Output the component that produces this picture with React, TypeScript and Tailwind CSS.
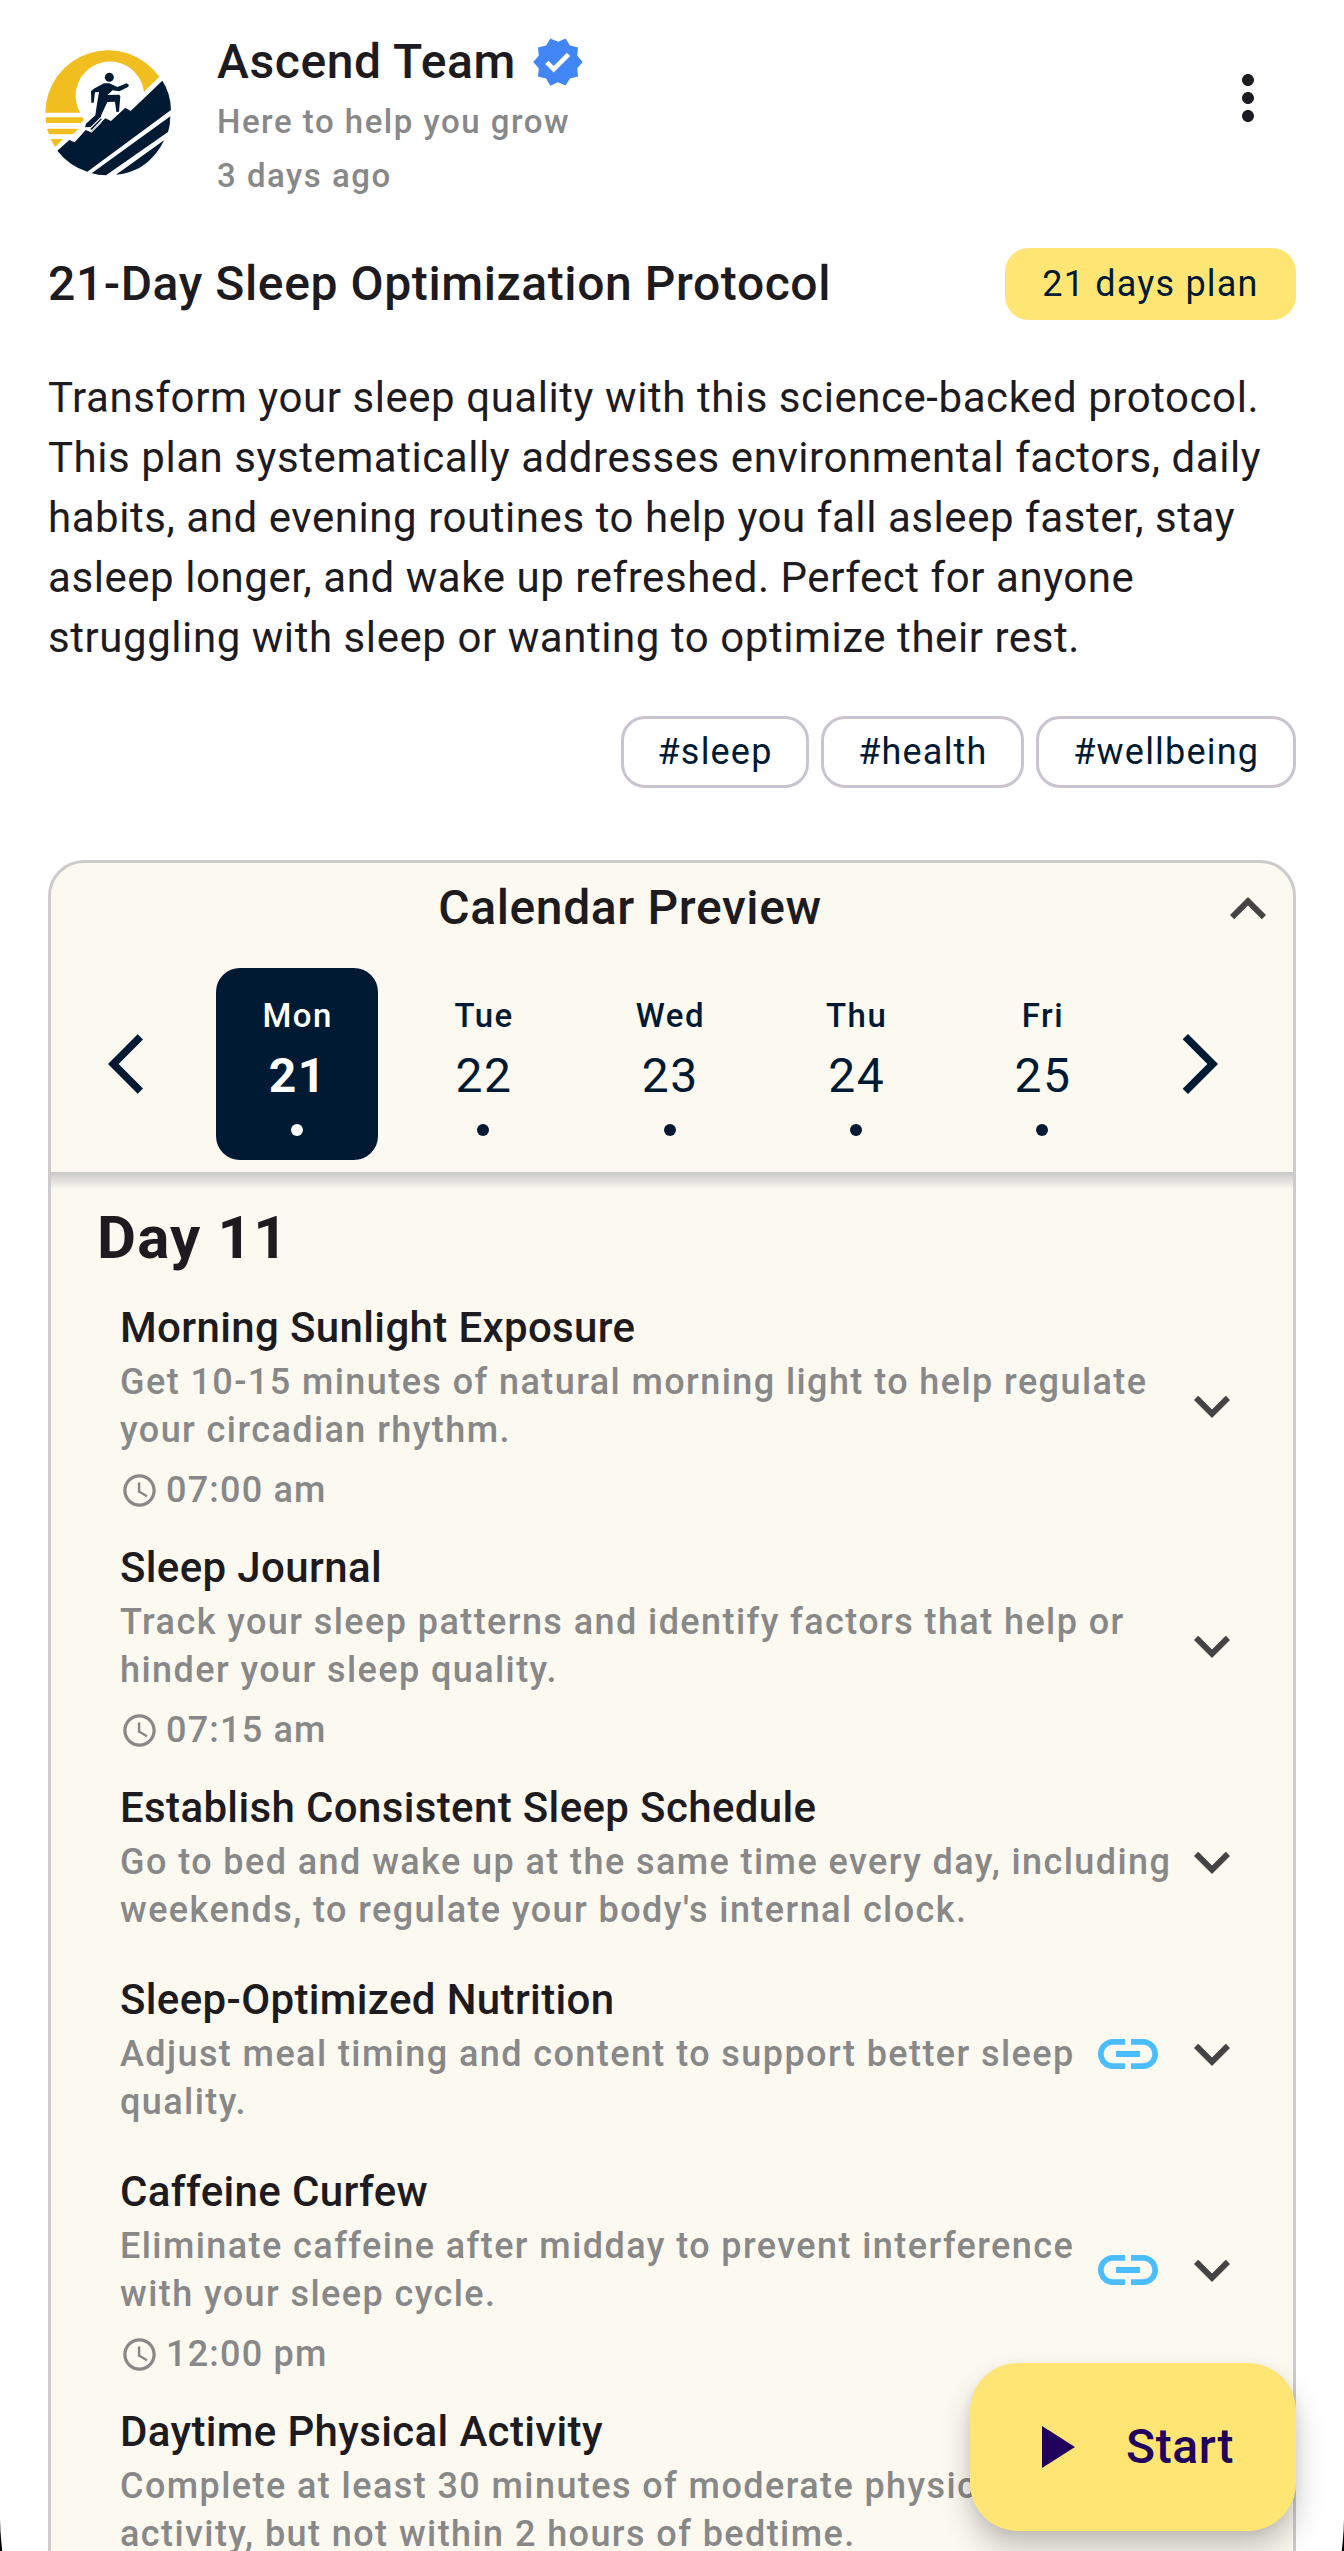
import React from "react";
import {
  MdArrowBackIos,
  MdArrowForwardIos,
  MdExpandLess,
  MdExpandMore,
  MdLink,
  MdMoreVert,
  MdPlayArrow,
  MdSchedule,
  MdVerified,
} from "react-icons/md";

const days = [
  { name: "Mon", date: 21, selected: true },
  { name: "Tue", date: 22 },
  { name: "Wed", date: 23 },
  { name: "Thu", date: 24 },
  { name: "Fri", date: 25 },
];

type Task = { title: string; text: string; time?: string; link?: boolean };

const tasks: Task[] = [
  {
    title: "Morning Sunlight Exposure",
    text: "Get 10-15 minutes of natural morning light to help regulate your circadian rhythm.",
    time: "07:00 am",
  },
  {
    title: "Sleep Journal",
    text: "Track your sleep patterns and identify factors that help or hinder your sleep quality.",
    time: "07:15 am",
  },
  {
    title: "Establish Consistent Sleep Schedule",
    text: "Go to bed and wake up at the same time every day, including weekends, to regulate your body's internal clock.",
  },
  {
    title: "Sleep-Optimized Nutrition",
    text: "Adjust meal timing and content to support better sleep quality.",
    link: true,
  },
  {
    title: "Caffeine Curfew",
    text: "Eliminate caffeine after midday to prevent interference with your sleep cycle.",
    time: "12:00 pm",
    link: true,
  },
  {
    title: "Daytime Physical Activity",
    text: "Complete at least 30 minutes of moderate physical activity, but not within 2 hours of bedtime.",
    link: true,
  },
];

function Logo() {
  return (
    <svg viewBox="45 60 378 378" className="mt-[24px] size-[126px] shrink-0">
      <g fill="#f0bf1f">
        <path d="M46 248A188.500 188.500 0 0 1 388 140L342 185A103 103 0 1 0 150 248Z" />
        <path d="M47 262H157L162 270L152 279H48Z" />
        <path d="M51 296H146L128 313H57Z" />
        <path d="M62 327H99L76 351Q68 340 62 327Z" />
      </g>
      <g fill="#001a33">
        <path d="M397 152Q422 190 423 240L172 425Q118 408 82 362L118 330L134 337L167 300L183 307L226 265L243 273L286 233L302 243Z" />
        <path d="M421 259Q421 285 414 306L228 436Q205 436 185 430Z" />
        <path d="M402 331C375 388 325 430 258 434Z" />
        <circle cx="238" cy="142" r="13.500" />
        <path d="M184 218L183 184L190 177L222 160L238 160L262 171L290 160L297 165L294 171L268 184L248 181L232 195L268 194L271 199L267 245L259 246L255 215L232 216L217 248L212 261L182 291L165 292L168 281L196 256L200 228L207 186L195 187L191 218Z" />
        <path d="M213 265L215 268L186 299L180 298Z" />
      </g>
      <path d="M184 308L214 278" stroke="#fff" strokeWidth="2" />
    </svg>
  );
}

function TaskRow({ title, text, time, link }: Task) {
  return (
    <div className="flex items-center">
      <div className="min-w-0 flex-1">
        <h3 className="text-[42px] leading-[60px] font-medium tracking-[0.360px] text-[#1d1b20]">{title}</h3>
        <p className="text-[36px] leading-[48px] font-medium tracking-[1.420px] text-[#888888]">{text}</p>
        <div className="h-3" />
        {time && (
          <div className="flex h-12 items-center gap-[7px] text-[#888888]">
            <MdSchedule className="size-[39px]" />
            <span className="text-[36px] leading-[48px] font-medium tracking-[1.200px]">{time}</span>
          </div>
        )}
      </div>
      {link && <MdLink className="mr-3 size-[72px] shrink-0 text-[#4bbdff]" />}
      <MdExpandMore className="size-[72px] shrink-0 text-[#444444]" />
    </div>
  );
}

export default function App() {
  return (
    <div className="relative h-[2551px] w-[1344px] overflow-hidden bg-white font-['Roboto',sans-serif] text-[#1d1b20]">
      <header className="flex h-[248px] items-start pt-[26px] pr-[60px] pl-[45px]">
        <Logo />
        <div className="ml-[46px] flex-1">
          <div className="flex items-center">
            <h1 className="text-[48px] leading-[72px] font-medium tracking-[0.600px]">Ascend Team</h1>
            <MdVerified className="ml-[15px] size-[54px] text-[#4285f4]" />
          </div>
          <p className="text-[33px] leading-[48px] font-medium tracking-[1.5px] text-[#888888]">Here to help you grow</p>
          <p className="mt-1.5 text-[33px] leading-[48px] font-medium tracking-[1.5px] text-[#888888]">3 days ago</p>
        </div>
        <MdMoreVert className="mt-[36px] size-[72px]" />
      </header>

      <main className="px-12">
        <div className="flex h-[72px] items-center justify-between">
          <h2 className="text-[48px] leading-[72px] font-medium tracking-[0.600px]">21-Day Sleep Optimization Protocol</h2>
          <span className="flex h-[72px] w-[291px] items-center justify-center rounded-[24px] bg-[#ffe574] text-[36px] leading-[48px] tracking-[1.2px] text-[#001a33]">
            21 days plan
          </span>
        </div>
        <p className="mt-12 text-[42px] leading-[60px] tracking-[0.560px]">
          Transform your sleep quality with this science-backed protocol. This plan systematically addresses
          environmental factors, daily habits, and evening routines to help you fall asleep faster, stay asleep longer,
          and wake up refreshed. Perfect for anyone struggling with sleep or wanting to optimize their rest.
        </p>

        <div className="mt-12 flex justify-end gap-3">
          {["#sleep", "#health", "#wellbeing"].map((tag) => (
            <span
              key={tag}
              className="flex h-[72px] items-center rounded-[24px] border-[3px] border-[#c9c4d0] px-[33.800px] text-[36px] leading-[48px] tracking-[1.2px] text-[#001a33]"
            >
              {tag}
            </span>
          ))}
        </div>

        <section className="mt-[72px] h-[1760px] rounded-[36px] border-[3px] border-[#cccccc] bg-[#fcf9f1]">
          <div className="flex h-[105px] items-center pr-[9px]">
            <h2 className="mt-[-15px] flex-1 pr-[3px] text-center text-[48px] leading-[72px] font-medium tracking-[0.620px]">
              Calendar Preview
            </h2>
            <MdExpandLess className="mt-[-13px] size-[72px] text-[#444444]" />
          </div>
          <div className="flex h-[204px] items-start pr-[57px] pl-[57px] text-[#001a33]">
            <MdArrowBackIos className="mt-[60px] size-[72px] shrink-0" />
            <div className="ml-9 flex flex-1 gap-[24.300px]">
              {days.map((d) => (
                <div
                  key={d.name}
                  className={
                    d.selected
                      ? "flex h-[192px] w-[162px] shrink-0 flex-col items-center rounded-[24px] bg-[#001a33] pt-6 text-white"
                      : "flex h-[192px] w-[162px] shrink-0 flex-col items-center rounded-[24px] pt-6"
                  }
                >
                  <span className="pl-[1.500px] text-[33px] leading-[48px] font-medium tracking-[1.5px]">{d.name}</span>
                  <span
                    className={
                      d.selected
                        ? "pl-[1.500px] text-[48px] leading-[72px] font-bold tracking-[1.5px]"
                        : "pl-[1.500px] text-[48px] leading-[72px] tracking-[1.5px]"
                    }
                  >
                    {d.date}
                  </span>
                  <span className="mt-3 size-3 rounded-full bg-current" />
                </div>
              ))}
            </div>
            <MdArrowForwardIos className="mt-[60px] size-[72px] shrink-0" />
          </div>
          <div className="h-[18px] bg-linear-to-b from-[#c8c8c6] to-[#fcf9f1]" />

          <h2 className="mt-[6px] pl-[46px] text-[60px] leading-[84px] font-bold tracking-[1.200px]">Day 11</h2>
          <div className="mt-[18px] flex flex-col gap-6 pr-[45px] pl-[69px]">
            {tasks.map((t) => (
              <TaskRow key={t.title} {...t} />
            ))}
          </div>
        </section>
      </main>

      <button className="absolute top-[2363px] left-[970px] flex h-[168px] w-[326px] items-center rounded-[48px] bg-[#ffe574] pl-12 text-[#21005d] shadow-[0_18px_30px_rgba(0,0,0,0.22),0_3px_12px_rgba(0,0,0,0.06)]">
        <MdPlayArrow className="size-[72px]" />
        <span className="ml-9 text-[48px] leading-[72px] font-medium tracking-[0.600px]">Start</span>
      </button>

      <svg viewBox="0 0 3 32" className="absolute bottom-0 left-0 h-8 w-[3px]">
        <path d="M0 0Q0.300 16 2.300 32H0Z" />
      </svg>
      <svg viewBox="0 0 3 32" className="absolute right-0 bottom-0 h-8 w-[3px]">
        <path d="M3 0Q2.700 16 0.700 32H3Z" />
      </svg>
    </div>
  );
}
